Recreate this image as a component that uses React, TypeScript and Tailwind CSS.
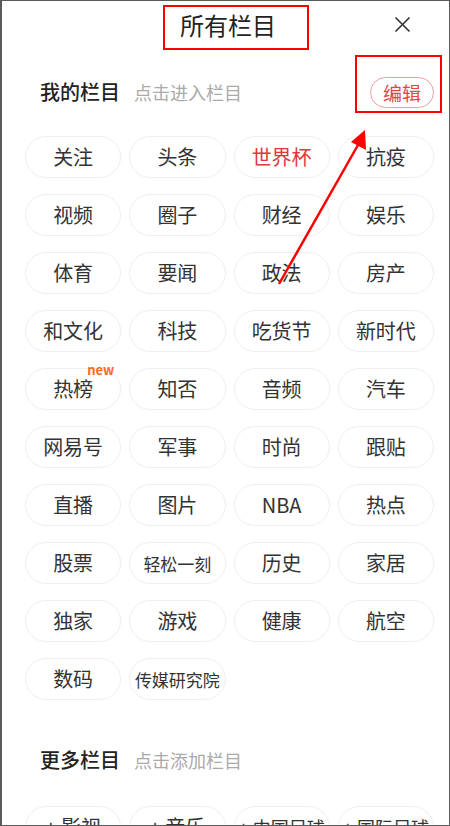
const myChannels: { name: string; red?: boolean; badge?: string; small?: boolean }[] = [
  { name: "关注" },
  { name: "头条" },
  { name: "世界杯", red: true },
  { name: "抗疫" },
  { name: "视频" },
  { name: "圈子" },
  { name: "财经" },
  { name: "娱乐" },
  { name: "体育" },
  { name: "要闻" },
  { name: "政法" },
  { name: "房产" },
  { name: "和文化" },
  { name: "科技" },
  { name: "吃货节" },
  { name: "新时代" },
  { name: "热榜", badge: "new" },
  { name: "知否" },
  { name: "音频" },
  { name: "汽车" },
  { name: "网易号" },
  { name: "军事" },
  { name: "时尚" },
  { name: "跟贴" },
  { name: "直播" },
  { name: "图片" },
  { name: "NBA" },
  { name: "热点" },
  { name: "股票" },
  { name: "轻松一刻", small: true },
  { name: "历史" },
  { name: "家居" },
  { name: "独家" },
  { name: "游戏" },
  { name: "健康" },
  { name: "航空" },
  { name: "数码" },
  { name: "传媒研究院", small: true },
];

const moreChannels = ["影视", "音乐", "中国足球", "国际足球"];

function Pill({ name, red, badge, small }: { name: string; red?: boolean; badge?: string; small?: boolean }) {
  return (
    <div className="relative h-[42px] rounded-full border border-[#efefef] flex items-center justify-center">
      <span
        className={`${small ? "text-[17px]" : "text-[20px]"} ${red ? "text-[#e0373d]" : "text-[#333]"} leading-none`}
      >
        {name}
      </span>
      {badge && (
        <span className="absolute right-[6px] top-[-6px] text-[13px] font-bold leading-none text-[#ff6a1f]">
          {badge}
        </span>
      )}
    </div>
  );
}

export default function App() {
  return (
    <div
      className="relative w-[450px] h-[826px] overflow-hidden bg-white border-t border-b border-r border-l-2 border-[#5a5a5a]"
      style={{ fontFamily: '"Noto Sans CJK SC", "Noto Sans", sans-serif' }}
    >
      {/* header */}
      <div className="flex items-center h-[47px]">
        <span className="ml-[178px] text-[24px] leading-none text-[#222]">所有栏目</span>
        <svg className="ml-auto mr-[38px]" width="17" height="17" viewBox="0 0 17 17">
          <path d="M1.5 1.5 L15.5 15.5 M15.5 1.5 L1.5 15.5" stroke="#333" strokeWidth="1.6" fill="none" />
        </svg>
      </div>

      {/* my channels */}
      <div className="flex items-center h-[42px] mt-[23px] pl-[38px] pr-[15px]">
        <span className="text-[20px] font-medium text-[#222] leading-none">我的栏目</span>
        <span className="ml-[14px] text-[18px] text-[#aaa] leading-none">点击进入栏目</span>
        <button className="ml-auto h-[31px] w-[64px] rounded-full border border-[#eba0a0] text-[19px] text-[#e04848] leading-none">
          编辑
        </button>
      </div>

      <div className="grid grid-cols-4 gap-x-[8px] gap-y-[16px] mt-[23px] pl-[23px] pr-[15px]">
        {myChannels.map((c) => (
          <Pill key={c.name} {...c} />
        ))}
      </div>

      {/* more channels */}
      <div className="flex items-center h-[42px] mt-[39px] pl-[38px]">
        <span className="text-[20px] font-medium text-[#222] leading-none">更多栏目</span>
        <span className="ml-[14px] text-[18px] text-[#aaa] leading-none">点击添加栏目</span>
      </div>

      <div className="grid grid-cols-4 gap-x-[8px] mt-[25px] pl-[23px] pr-[15px]">
        {moreChannels.map((n) => (
          <div key={n} className="h-[42px] rounded-full border border-[#efefef] flex items-center justify-center">
            <span className={`${n.length > 2 ? "text-[18px]" : "text-[20px]"} text-[#333] leading-none`}>+ {n}</span>
          </div>
        ))}
      </div>

      {/* annotations */}
      <div className="absolute left-[161px] top-[4px] w-[146px] h-[45px] border-2 border-[#ff0000]" />
      <div className="absolute left-[353px] top-[54px] w-[87px] h-[58px] border-2 border-[#ff0000]" />
      <svg className="absolute left-0 top-0 pointer-events-none" width="450" height="826">
        <line x1="277" y1="283" x2="356" y2="144" stroke="#ff0000" strokeWidth="2.5" />
        <polygon points="363,129 364,149 349,141" fill="#ff0000" />
      </svg>
    </div>
  );
}
